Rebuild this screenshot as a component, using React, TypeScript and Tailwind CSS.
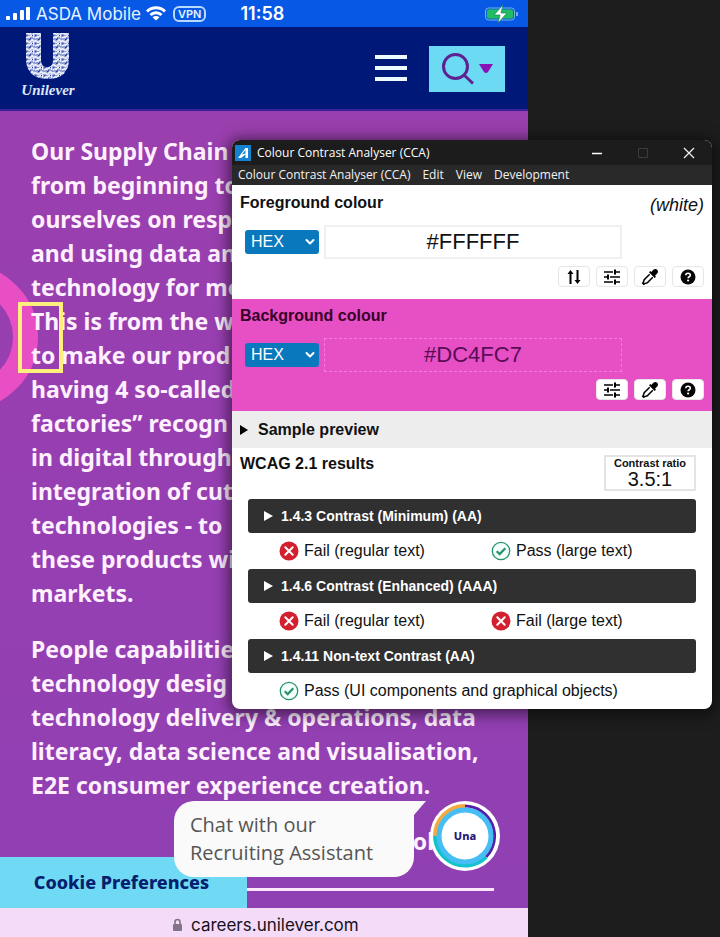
import React from "react";

const stroke = { fill: "none", stroke: "currentColor", strokeLinecap: "round", strokeLinejoin: "round" } as const;

function SwapIcon() {
  return (
    <svg viewBox="0 0 16 16" className="size-4" {...stroke} strokeWidth="2" strokeLinecap="butt">
      <path d="M4.5 15V3M11.5 1v12" />
      <path d="M4.5 1 1.5 5h6zM11.5 15l-3-4h6z" fill="currentColor" stroke="none" />
    </svg>
  );
}

function SlidersIcon() {
  return (
    <svg viewBox="0 0 18 16" className="h-4 w-[18px]" {...stroke} strokeWidth="1.6" strokeLinecap="butt">
      <path d="M1 3h9M12 3h5M1 8h4M7 8h10M1 13h9M12 13h5" />
      <path d="M12 0.5v5M5 5.5v5M12 10.5v5" strokeWidth="2" />
    </svg>
  );
}

function DropperIcon() {
  return (
    <svg viewBox="0 0 18 18" className="size-[18px]" fill="currentColor">
      <path d="M16.2 1.8c-1.1-1.1-2.8-1-3.8 0L10.300 4 9.300 3 8 4.300l5.700 5.700L15 8.700l-1-1 2.200-2.100c1-1 1.100-2.700 0-3.800z" />
      <path d="M8.700 6.200 3.200 11.700 2.400 14.300 1.700 15.200 2.800 16.300l.9-.7 2.600-.8 5.500-5.500" fill="none" stroke="currentColor" strokeWidth="1.500" />
    </svg>
  );
}

function HelpIcon() {
  return (
    <svg viewBox="0 0 16 16" className="size-4">
      <circle cx="8" cy="8" r="7.500" fill="#050505" />
      <path d="M5.800 6.300c0-1.300 1-2.100 2.200-2.100s2.300.8 2.300 2c0 1.500-2.200 1.600-2.200 3.100" fill="none" stroke="#fff" strokeWidth="1.600" />
      <circle cx="8.100" cy="11.500" r="1.100" fill="#fff" />
    </svg>
  );
}

function ToolButton({ label, children }: { label: string; children: React.ReactNode }) {
  return (
    <button type="button" aria-label={label} className="flex h-[21px] w-8 items-center justify-center rounded-sm border border-[#e6e6e6] bg-white text-black">
      {children}
    </button>
  );
}

function FormatSelect({ label }: { label: string }) {
  return (
    <div className="relative w-[74px] shrink-0">
      <select aria-label={label} defaultValue="HEX" className="block h-6 w-full appearance-none rounded-[3px] bg-[#0a78bd] pl-1.5 text-base leading-6 text-white">
        <option>HEX</option>
        <option>RGB</option>
        <option>HSL</option>
      </select>
      <svg viewBox="0 0 10 8" className="pointer-events-none absolute top-2 right-1 h-2 w-2.5 text-white" {...stroke} strokeWidth="2">
        <path d="m1.500 2 3.500 3.500L8.500 2" />
      </svg>
    </div>
  );
}

function StatusIcon({ pass }: { pass: boolean }) {
  return pass ? (
    <svg viewBox="0 0 20 20" className="size-5 shrink-0" fill="none" stroke="#26936a">
      <circle cx="10" cy="10" r="8.700" strokeWidth="1.300" fill="#f4fffb" />
      <path d="m5.700 10.200 3 2.900 5.600-5.900" strokeWidth="2.200" />
    </svg>
  ) : (
    <svg viewBox="0 0 20 20" className="size-5 shrink-0">
      <circle cx="10" cy="10" r="9.500" fill="#d3202e" />
      <path d="m6.300 6.300 7.400 7.400m0-7.400-7.400 7.400" stroke="#fff" strokeWidth="2" strokeLinecap="round" />
    </svg>
  );
}

function Result({ pass, text }: { pass: boolean; text: string }) {
  return (
    <p className="flex items-center gap-[5px] text-base leading-5 whitespace-nowrap">
      <StatusIcon pass={pass} />
      {text}
    </p>
  );
}

function Criterion({ title, results }: { title: string; results: { pass: boolean; text: string }[] }) {
  return (
    <section>
      <button type="button" aria-expanded="false" className="flex h-[34px] w-full items-center gap-2 rounded-[3px] bg-[#303030] pl-4 text-left text-sm font-bold text-white">
        <svg viewBox="0 0 9 10" className="h-2.5 w-[9px]" fill="currentColor"><path d="M0 0v10l9-5z" /></svg>
        {title}
      </button>
      <div className="flex h-9 items-center pl-[31px]">
        {results.map((r) => (
          <div key={r.text} className="w-[212px] shrink-0"><Result {...r} /></div>
        ))}
      </div>
    </section>
  );
}

function Analyser() {
  return (
    <section aria-label="Colour Contrast Analyser" className="absolute top-[140px] left-[232px] w-[480px] overflow-hidden rounded-lg bg-white font-['Liberation_Sans',Arial,sans-serif] text-[#111] shadow-[0_2px_14px_4px_rgba(0,0,0,0.5)]">
      <header className="flex h-[25px] items-center bg-[#1c1c1c] pl-[3px] text-white">
        <svg viewBox="0 0 16 16" className="size-4">
          <path d="M0 0h16v16H0z" fill="#1583d0" />
          <path d="m3 13 7.500-10 2.500 0v10h-2.500V9.500L6 13zM7 9.500l3.500-1V5z" fill="#fff" fillRule="evenodd" />
        </svg>
        <h1 className="grow pl-1.5 font-['Open_Sans',sans-serif] text-xs">Colour Contrast Analyser (CCA)</h1>
        <button type="button" aria-label="Minimise" className="flex h-full w-[46px] items-center justify-center">
          <svg viewBox="0 0 12 12" className="size-3" stroke="#fff" strokeWidth="1.300"><path d="M1 6.500h10" /></svg>
        </button>
        <button type="button" aria-label="Maximise" className="flex h-full w-[46px] items-center justify-center">
          <svg viewBox="0 0 12 12" className="size-3" fill="none" stroke="#3c3c3c"><path d="M1.500 1.500h9v9h-9z" /></svg>
        </button>
        <button type="button" aria-label="Close" className="flex h-full w-[46px] items-center justify-center">
          <svg viewBox="0 0 12 12" className="size-3" stroke="#eee" strokeWidth="1.300"><path d="m1 1 10 10M11 1 1 11" /></svg>
        </button>
      </header>
      <nav className="flex h-5 items-center gap-3 bg-[#292929] pl-1.5 font-['Open_Sans',sans-serif] text-xs text-[#f2f2f2]">
        <button type="button">Colour Contrast Analyser (CCA)</button>
        <button type="button">Edit</button>
        <button type="button">View</button>
        <button type="button">Development</button>
      </nav>

      <section className="h-[114px] px-2 pt-2">
        <div className="flex h-8 justify-between">
          <h2 className="text-base leading-5 font-bold">Foreground colour</h2>
          <p className="text-lg leading-6 italic">(white)</p>
        </div>
        <div className="flex items-center gap-[5px] pl-[5px]">
          <FormatSelect label="Foreground format" />
          <input aria-label="Foreground value" defaultValue="#FFFFFF" className="h-[34px] w-[298px] border-2 border-[#f0f0f0] bg-white text-center text-[22px]" />
        </div>
        <div className="flex justify-end gap-1.5 pt-[7px]">
          <ToolButton label="Swap colours"><SwapIcon /></ToolButton>
          <ToolButton label="Foreground sliders"><SlidersIcon /></ToolButton>
          <ToolButton label="Pick foreground"><DropperIcon /></ToolButton>
          <ToolButton label="Foreground help"><HelpIcon /></ToolButton>
        </div>
      </section>

      <section className="h-28 bg-[#e650c4] px-2 pt-[7px]">
        <div className="flex h-8">
          <h2 className="text-base leading-5 font-bold text-[#380028]">Background colour</h2>
        </div>
        <div className="flex items-center gap-[5px] pl-[5px]">
          <FormatSelect label="Background format" />
          <input aria-label="Background value" defaultValue="#DC4FC7" className="h-[34px] w-[298px] border border-dashed border-[#f57bdc] bg-transparent text-center text-[22px] text-[#5b0c56]" />
        </div>
        <div className="flex justify-end gap-1.5 pt-[7px]">
          <ToolButton label="Background sliders"><SlidersIcon /></ToolButton>
          <ToolButton label="Pick background"><DropperIcon /></ToolButton>
          <ToolButton label="Background help"><HelpIcon /></ToolButton>
        </div>
      </section>

      <button type="button" aria-expanded="false" className="flex h-[37px] w-full items-center gap-2.5 bg-[#ededed] pl-2 text-left text-base font-bold">
        <svg viewBox="0 0 8 10" className="h-2.5 w-2" fill="#000"><path d="M0 0v10l8-5z" /></svg>
        Sample preview
      </button>

      <section>
        <div className="flex h-[51px] justify-between pt-[7px] pr-4 pl-2">
          <h2 className="text-base leading-[18px] font-bold">WCAG 2.1 results</h2>
          <div className="h-9 w-[92px] border-2 border-[#e4e4e4] text-center">
            <h3 className="text-[11px] leading-3 font-bold">Contrast ratio</h3>
            <p className="text-xl leading-5">3.5:1</p>
          </div>
        </div>
        <div className="px-4">
          <Criterion title="1.4.3 Contrast (Minimum) (AA)" results={[{ pass: false, text: "Fail (regular text)" }, { pass: true, text: "Pass (large text)" }]} />
          <Criterion title="1.4.6 Contrast (Enhanced) (AAA)" results={[{ pass: false, text: "Fail (regular text)" }, { pass: false, text: "Fail (large text)" }]} />
          <Criterion title="1.4.11 Non-text Contrast (AA)" results={[{ pass: true, text: "Pass (UI components and graphical objects)" }]} />
        </div>
      </section>
    </section>
  );
}

function UnileverLogo() {
  return (
    <a href="#home" aria-label="Unilever" className="flex w-[58px] flex-col items-center text-[#dfe6fa]">
      <svg viewBox="0 0 46 49" className="h-[49px] w-[46px]">
        <defs>
          <pattern id="filigree" width="9" height="8" patternUnits="userSpaceOnUse">
            <path d="M0 0h9v8H0z" fill="#8f9fd6" />
            <path d="M0 3c2-4 4 3 6-1s3 3 3 1M1 7c2-3 4 1 5-2s3 1 3 2" fill="none" stroke="#f7f9ff" strokeWidth="1.500" />
            <path d="M4 .5h1.500M1 4.800h1.500M7 4.500h1M5 7.200h1" stroke="#27389a" strokeWidth="1.200" />
          </pattern>
        </defs>
        <path d="M1 2h15v26c0 6 2 8 6 8s6-2 6-8V2h16v26c0 13-7 20-21 20S1 41 1 28z" fill="url(#filigree)" />
      </svg>
      <span className="font-['Liberation_Serif',serif] text-[15px] leading-5 font-bold italic">Unilever</span>
    </a>
  );
}

const firstParagraph = [
  "Our Supply Chain",
  "from beginning to",
  "ourselves on resp",
  "and using data an",
  "technology for mo",
  "This is from the w",
  "to make our prod",
  "having 4 so-called",
  "factories” recogn",
  "in digital through",
  "integration of cut",
  "technologies - to",
  "these products wi",
  "markets.",
];

const secondParagraph = [
  "People capabilitie",
  "technology desig",
  "technology delivery & operations, data",
  "literacy, data science and visualisation,",
  "E2E consumer experience creation.",
];

function Lines({ lines }: { lines: string[] }) {
  return (
    <p>
      {lines.map((line) => (
        <span key={line} className="block whitespace-nowrap">{line}</span>
      ))}
    </p>
  );
}

function Phone() {
  return (
    <main className="flex min-w-0 grow flex-col">
      <div className="flex h-[27px] items-center bg-[#0658e5] pl-1.5 font-['Inter',sans-serif] text-[17px] leading-6 text-[#e5f3ff]">
        <svg viewBox="0 0 26 14" className="h-3.5 w-[26px]" fill="#fff">
          <rect x="0" y="9" width="4" height="4" rx="1" /><rect x="7" y="6" width="4" height="7" rx="1" /><rect x="14" y="3" width="4" height="10" rx="1" /><rect x="20" y="0" width="4" height="13" rx="1" />
        </svg>
        <span className="w-[114px] pl-1 whitespace-nowrap">ASDA Mobile</span>
        <svg viewBox="0 0 20 15" className="h-[15px] w-5" fill="none" stroke="#fff" strokeWidth="3">
          <path d="M1 5.500c5-5 13-5 18 0M4.500 9c3-3 8-3 11 0" /><path d="m10 14.500-3.500-3.300c2-1.700 5-1.700 7 0z" fill="#fff" stroke="none" />
        </svg>
        <span className="ml-[7px] rounded-md border-2 border-[#b8daff] px-[3px] text-[11px] leading-3 font-semibold">VPN</span>
        <time className="grow pl-[34px] text-lg leading-6 font-semibold text-white">11:58</time>
        <svg viewBox="0 0 36 18" className="mr-2 h-[18px] w-9">
          <rect x="1.500" y="3" width="29" height="12" rx="3" fill="#0b66c8" stroke="#71aee8" />
          <rect x="3" y="4.500" width="26" height="9" rx="2" fill="#20bd62" />
          <path d="M33 7v4" stroke="#71aee8" strokeWidth="2" />
          <path d="m19 0-9 10h6l-2 8 9-10h-6z" fill="#fff" stroke="#10845a" strokeWidth=".7" />
        </svg>
      </div>
      <header className="flex h-[84px] items-start border-b-2 border-[#38249a] bg-[#001978] pt-1 pl-[19px]">
        <UnileverLogo />
        <div className="grow" />
        <button type="button" aria-label="Menu" className="mt-6 mr-[22px] flex w-8 flex-col gap-[7px]">
          <span className="h-1 bg-[#ecfbff]" /><span className="h-1 bg-[#ecfbff]" /><span className="h-1 bg-[#ecfbff]" />
        </button>
        <button type="button" aria-label="Search" className="mt-[15px] mr-[23px] flex h-[46px] w-[76px] items-center justify-center gap-1 bg-[#6ddaf3] text-[#5f2092]">
          <svg viewBox="0 0 34 34" className="size-[34px]" fill="none" stroke="currentColor" strokeWidth="3"><circle cx="14.500" cy="14.500" r="12" /><path d="m23 23 9 8.500" /></svg>
          <svg viewBox="0 0 14 10" className="h-2.5 w-3.5" fill="#8a12b4"><path d="M0 0h14L9 8q-2 2-4 0z" /></svg>
        </button>
      </header>

      <div className="relative h-[797px] overflow-hidden bg-linear-to-b from-[#9a3fae] via-[#963fb2] to-[#8f40b2] font-['Noto_Sans','Open_Sans',sans-serif] text-white">
        <div className="absolute top-[153px] left-[-108px] size-[146px] rounded-full border-[25px] border-[#e84fc4]" />
        <article className="relative flex flex-col gap-[22px] pt-[23px] pl-[31px] text-[23px] leading-[34px] font-bold text-[#fff0ff]">
          <Lines lines={firstParagraph} />
          <Lines lines={secondParagraph} />
        </article>
        <p className="relative mt-[22px] pr-[94px] text-right text-[23px] leading-[34px] font-bold text-[#fff0ff]">ol</p>
        <div className="absolute top-[191px] left-[18px] h-[71px] w-[45px] border-4 border-[#fff07d]" />
        <hr className="absolute right-[34px] bottom-[17px] left-[247px] border-t-[3px] border-[#ffe6ff]" />
        <button type="button" className="absolute bottom-0 left-0 h-[51px] w-[247px] bg-[#70daf5] pr-1 pb-0.5 text-lg font-extrabold text-[#06206d]">Cookie Preferences</button>
        <aside className="absolute top-[690px] left-[174px] w-[240px] rounded-[20px] rounded-tr-none bg-[#fafafa] px-4 py-2.5 font-['Open_Sans',sans-serif] text-xl leading-7 whitespace-nowrap text-[#555]">
          Chat with our<br />Recruiting Assistant
          <svg viewBox="0 0 12 14" className="absolute top-0 left-full h-3.5 w-3" fill="#fafafa"><path d="M0 0h12L0 14z" /></svg>
        </aside>
        <button type="button" aria-label="Chat with Una" className="absolute top-[690px] left-[430px] flex size-[70px] items-center justify-center text-[11px] font-extrabold text-[#251878]">
          <svg viewBox="0 0 70 70" className="absolute inset-0 size-[70px]" fill="none">
            <circle cx="35" cy="35" r="35" fill="#fff" />
            <path d="M5 35A30 30 0 0 1 35 5" stroke="#f3a943" strokeWidth="4" />
            <path d="M35 5A30 30 0 0 1 56 56" stroke="#5520a8" strokeWidth="3" />
            <path d="M56 56A30 30 0 0 1 5 35" stroke="#12c3ca" strokeWidth="4" />
            <circle cx="35" cy="35" r="26" stroke="#46bdf3" strokeWidth="5" />
          </svg>
          <span className="relative">Una</span>
        </button>
      </div>
      <footer className="flex h-[29px] items-center gap-2 bg-[#f4dcf8] pt-1 pl-[172px] font-['Inter',sans-serif] text-[17px] leading-6 text-[#17101b]">
        <svg viewBox="0 0 11 14" className="h-3.5 w-[11px]"><path d="M3 7V4a2.500 2.500 0 0 1 5 0v3" fill="none" stroke="#817486" strokeWidth="1.600" /><rect x="1" y="6" width="9" height="7" rx="1" fill="#817486" /></svg>
        careers.unilever.com
      </footer>
    </main>
  );
}

export default function App() {
  return (
    <div className="relative flex min-h-screen bg-[#1d1d1d]">
      <Phone />
      <div className="w-48 shrink-0" />
      <Analyser />
    </div>
  );
}
